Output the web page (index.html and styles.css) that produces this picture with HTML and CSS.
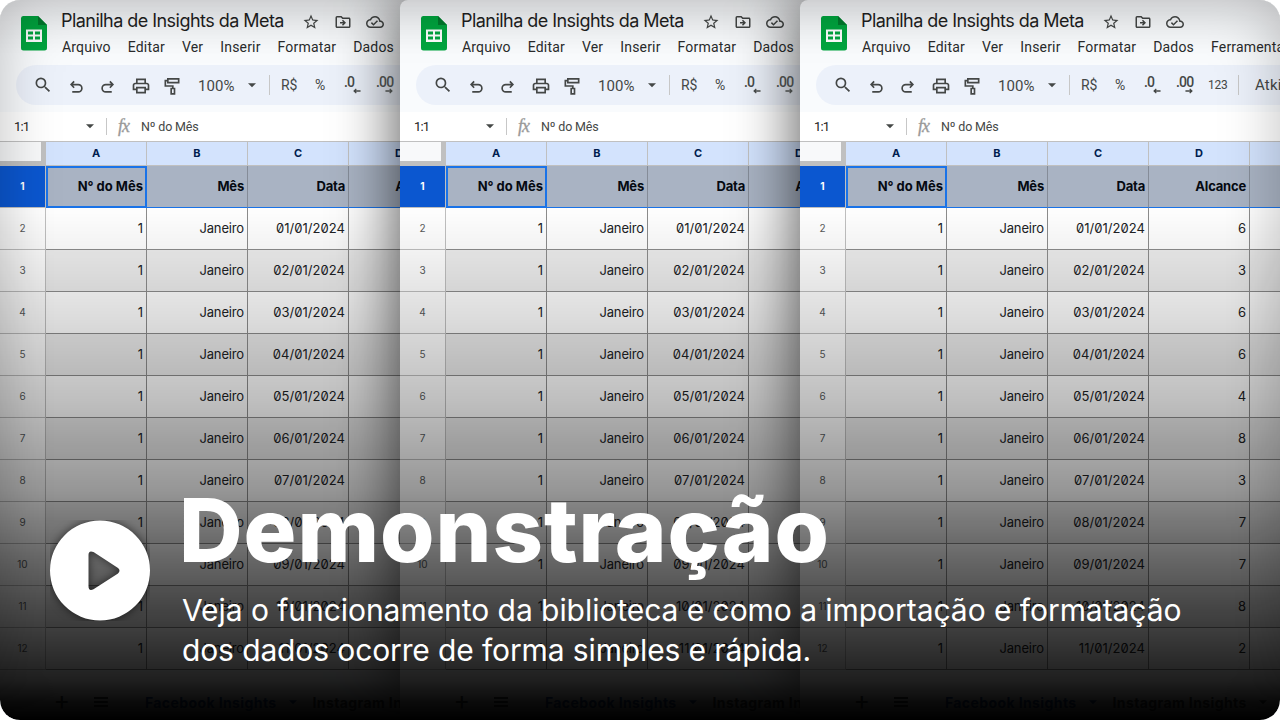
FILE: index.html
```html
<!DOCTYPE html>
<html lang="pt-BR">
<head>
<meta charset="utf-8">
<title>Demonstração</title>
<link rel="stylesheet" href="styles.css">
</head>
<body>
<svg class="defs" aria-hidden="true">
  <symbol id="sheets" viewBox="0 0 26 35"><path d="M2 0h15l9 9v23a2.500 2.500 0 0 1-2.500 2.500h-21A2.500 2.500 0 0 1 0 32V2.500A2.500 2.500 0 0 1 2 0z" fill="#00a63f"/><path d="M17 0l9 9h-9z" fill="#007b2d"/><path d="M5 13.500h16v12.500H5z" fill="#fff"/><path d="M7 15.500h5v3H7zM14 15.500h5v3h-5zM7 20.500h5v3H7zM14 20.500h5v3h-5z" fill="#00a63f"/></symbol>
  <symbol id="star" viewBox="0 0 24 24"><path fill="currentColor" d="M22 9.240l-7.190-.62L12 2 9.190 8.630 2 9.240l5.460 4.730L5.820 21 12 17.270 18.180 21l-1.630-7.030L22 9.240zM12 15.400l-3.760 2.270 1-4.280-3.320-2.880 4.380-.38L12 6.100l1.710 4.040 4.380.38-3.320 2.880 1 4.280L12 15.400z"/></symbol>
  <symbol id="folder" viewBox="0 0 24 24"><path fill="currentColor" d="M20 6h-8l-2-2H4a2 2 0 0 0-2 2v12c0 1.100.9 2 2 2h16c1.100 0 2-.9 2-2V8c0-1.100-.9-2-2-2zm0 12H4V6h5.170l2 2H20v10zm-8-1l4-4-4-4-1.400 1.400 1.600 1.600H8v2h4.200l-1.600 1.600z"/></symbol>
  <symbol id="cloud" viewBox="0 0 24 24"><path fill="currentColor" d="M19.350 10.040C18.670 6.590 15.640 4 12 4 9.110 4 6.600 5.640 5.350 8.040 2.340 8.360 0 10.910 0 14c0 3.310 2.690 6 6 6h13c2.760 0 5-2.240 5-5 0-2.640-2.050-4.780-4.650-4.960zM19 18H6c-2.210 0-4-1.790-4-4 0-2.050 1.530-3.760 3.560-3.970l1.070-.11.5-.95C8.080 7.140 9.940 6 12 6c2.620 0 4.880 1.860 5.390 4.430l.3 1.500 1.530.11c1.560.1 2.780 1.410 2.780 2.960 0 1.650-1.350 3-3 3zm-9-3.820l-2.090-2.090L6.500 13.500 10 17l6.010-6.010-1.410-1.410z"/></symbol>
  <symbol id="search" viewBox="0 0 24 24"><path fill="currentColor" d="M15.500 14h-.79l-.28-.27A6.470 6.470 0 0 0 16 9.500 6.500 6.500 0 1 0 9.500 16c1.610 0 3.090-.59 4.230-1.570l.27.28v.79l5 4.990L20.490 19l-4.990-5zm-6 0C7.010 14 5 11.990 5 9.500S7.010 5 9.500 5 14 7.010 14 9.500 11.990 14 9.500 14z"/></symbol>
  <symbol id="undo" viewBox="0 0 24 24"><path fill="none" stroke="currentColor" stroke-width="2.200" d="M9.500 4.500 5.500 8.800l4 4.200M6 8.800h9a4.700 4.700 0 0 1 0 9.700H7"/></symbol>
  <symbol id="print" viewBox="0 0 24 24"><path fill="currentColor" d="M19 8h-1V3H6v5H5c-1.660 0-3 1.340-3 3v6h4v4h12v-4h4v-6c0-1.660-1.340-3-3-3zM8 5h8v3H8V5zm8 14H8v-4h8v4zm4-4h-2v-2H6v2H4v-4c0-.55.45-1 1-1h14c.55 0 1 .45 1 1v4z"/></symbol>
  <symbol id="paint" viewBox="0 0 24 24"><path fill="none" stroke="currentColor" stroke-width="2" d="M7 3.500h13v4.500H7zM7 5.500H4V12h9v3M11 15h4v6.500h-4z"/></symbol>
  <symbol id="caret" viewBox="0 0 8 5"><path fill="currentColor" d="M0 .3h8l-4 4z"/></symbol>
  <symbol id="arrow" viewBox="0 0 9 6"><path fill="none" stroke="currentColor" stroke-width="1.500" d="M8.500 3H1.500M3.700.6 1.300 3l2.400 2.400"/></symbol>
</svg>
<main class="frame">
  <div class="panels" id="panels"></div>
  <div class="vignette"></div>
  <section class="caption">
    <svg class="play" viewBox="0 0 100 101"><path fill="#fff" fill-rule="evenodd" d="M50 .5a50 50 0 1 1 0 100 50 50 0 0 1 0-100zM38.500 35v31q0 5.500 5 3.200L68 53.500q3-2.700 0-5.400L43.500 32q-5-2-5 3z"/></svg>
    <div class="words">
      <h1>Demonstração</h1>
      <p><span class="line1">Veja o funcionamento da biblioteca e como a importação e formatação</span><br><span class="line2">dos dados ocorre de forma simples e rápida.</span></p>
    </div>
  </section>
</main>
<script src="app.js"></script>
</body>
</html>
```
FILE: styles.css
```css
* { box-sizing: border-box; }
body { margin: 0; background: #fff; font-family: Roboto, "Liberation Sans", sans-serif; }
.defs { display: none; }
svg { display: block; flex: none; }
.frame { position: relative; width: 1280px; height: 720px; border-radius: 20px; overflow: hidden; background: #aaa; }
.panels { display: grid; grid-template-columns: 400px 400px 480px; height: 720px; }
.panel { width: 480px; height: 720px; overflow: hidden; background: #f9fbfd; border-radius: 8px 0 0 8px; box-shadow: 0 0 64px rgba(0,0,0,.7); }
.top { height: 65px; display: flex; padding: 16px 0 0 21px; }
.top > svg { width: 26px; height: 35px; }
.heading { margin: -7px 0 0 14px; flex: none; }
.title-row { display: flex; align-items: center; height: 24px; color: #444746; }
.doc-title { width: 241px; font: 400 18px/24px Inter, sans-serif; letter-spacing: -.54px; color: #1f1f1f; white-space: nowrap; }
.title-row svg { width: 18px; height: 18px; margin-right: 14px; margin-top: 2px; }
.menu { display: flex; gap: 17px; padding: 5px 0 0 1px; font-size: 14px; line-height: 18px; letter-spacing: .18px; color: #2a2b2c; white-space: nowrap; }
.toolbar { width: 640px; height: 40px; margin-left: 16px; border-radius: 20px; background: #ecf1fa; color: #444746; display: flex; align-items: center; padding-left: 17px; }
.toolbar svg { width: 20px; height: 20px; }
.toolbar .i-search { margin: 0 14px 0 0; }
.toolbar .i-undo, .toolbar .i-redo { width: 18px; height: 18px; margin: 3px 14px 0 0; }
.toolbar .i-redo { transform: scaleX(-1); }
.toolbar .i-print { width: 20px; margin: 2px 11px 0 0; }
.toolbar .i-paint { width: 20px; margin: 2px 16px 0 0; }
.zoom { width: 50px; font-size: 15px; line-height: 20px; letter-spacing: .1px; margin-top: 2px; }
.toolbar .i-caret, .formula .i-caret { width: 8px; height: 5px; }
.bar { width: 1px; height: 20px; background: #c7c7c7; }
.toolbar .bar { margin: 0 11px 0 13px; }
.money { width: 34px; font-size: 14px; letter-spacing: -.2px; margin-top: -1px; }
.percent { width: 29px; font-size: 14px; margin-top: -1px; }
.decimal { width: 32px; height: 20px; position: relative; font: 500 14px/15px Roboto, sans-serif; letter-spacing: -.8px; }
.toolbar .decimal svg { position: absolute; width: 8px; height: 6px; left: 9px; top: 13px; }
.toolbar .decimal.more svg { transform: scaleX(-1); }
.n123 { font-size: 12px; width: 19px; letter-spacing: -.3px; }
.toolbar .last-bar { margin: 0 16px 0 11px; }
.font-name { font-size: 15px; letter-spacing: .2px; }
.formula { height: 29px; margin-top: 8px; padding: 0 0 2px 14px; background: #fff; display: flex; align-items: center; color: #444746; border-bottom: 1px solid #c0c0c0; box-shadow: 0 -1px #fff; }
.address { width: 72px; font-size: 13px; letter-spacing: -.8px; color: #222; }
.formula .bar { height: 17px; margin: 0 11px 0 12px; }
.fx { width: 23px; font: italic 18px/20px "Liberation Serif", serif; letter-spacing: -1px; -webkit-text-stroke: .3px #999; color: #999; }
.value { font-size: 12.500px; letter-spacing: -.15px; }
.sheet { display: grid; grid-template-columns: 46px repeat(5, 101px); width: 551px; background: #fff; }
.corner { height: 24px; border-right: 5px solid #c0c0c0; border-bottom: 5px solid #c0c0c0; background: #f8f9fa; }
.col { height: 24px; background: #d3e3fd; border-right: 1px solid #c0c0c0; border-bottom: 1px solid #c0c0c0; font: 700 11px/23px Inter, sans-serif; text-align: center; color: #001d4f; }
.rowno { height: 42px; border-right: 1px solid #c0c0c0; border-bottom: 1px solid #c0c0c0; font: 400 10px/41px Inter, sans-serif; color: #575a5a; text-align: center; }
.rowno.on { background: #0b57d0; color: #fff; font-weight: 700; }
.cell { height: 42px; padding-right: 3px; border-right: 1px solid #8d8d8d; border-bottom: 1px solid #8d8d8d; font: 400 13px/40px Inter, sans-serif; font-feature-settings: "zero"; letter-spacing: -.15px; color: #202225; text-align: right; white-space: nowrap; }
.cell.date { letter-spacing: .05px; }
.cell.shade { background: #eee; }
.cell.head { background: #a9b3c3; font-weight: 700; font-feature-settings: normal; letter-spacing: -.2px; color: #060a12; border-right-color: #858c98; border-bottom-color: #1a73e8; }
.cell.head.sel { border: 0; box-shadow: inset 0 0 0 2px #1a73e8; padding-right: 4px; letter-spacing: 0; }
.foot { display: flex; align-items: center; height: 50px; padding: 14px 0 0 55px; font: 700 14px Inter, sans-serif; letter-spacing: .4px; color: #444746; white-space: nowrap; }
.plus { font: 24px/20px Roboto, sans-serif; width: 41px; }
.lines { width: 14px; height: 10px; border-top: 2px solid; border-bottom: 2px solid; background: linear-gradient(currentColor, currentColor) center/14px 2px no-repeat; margin-right: 37px; }
.tab { width: 174px; display: flex; align-items: center; gap: 12px; }
.tab svg { width: 8px; height: 5px; }
.tab.active { color: #1c4fa0; }
.vignette { position: absolute; inset: 0; border-radius: 20px; box-shadow: inset 0 0 60px rgba(0,0,0,.25); background: linear-gradient(to bottom, rgba(0,0,0,.05), transparent 60px), linear-gradient(to bottom, transparent 205px, rgba(0,0,0,.05) 250px, rgba(0,0,0,.125) 310px, rgba(0,0,0,.25) 400px, rgba(0,0,0,.41) 490px, rgba(0,0,0,.6) 560px, rgba(0,0,0,.76) 630px, rgba(0,0,0,.88) 680px, rgba(0,0,0,.96) 703px, #000 720px); }
.caption { position: absolute; left: 50px; top: 478px; display: flex; color: #fff; }
.play { width: 100px; height: 101px; margin: 42px 32px 0 0; overflow: hidden; }
.play path { filter: drop-shadow(0 0 5px rgba(0,0,0,.6)); }
h1 { margin: -1px 0 0 -3px; font: 800 88px/106px Inter, sans-serif; letter-spacing: 1px; white-space: nowrap; }
.words p { margin: 7px 0 0; font: 400 30px/40px Inter, sans-serif; white-space: nowrap; }
.line1 { letter-spacing: -.05px; }
.line2 { letter-spacing: -.12px; }
```
FILE: app.js
```js
const icon = (id, cls = 'i-' + id) => `<svg class="${cls}"><use href="#${id}"/></svg>`;
const reach = [6, 3, 6, 6, 4, 8, 3, 7, 7, 8, 2];
const header = ['N° do Mês', 'Mês', 'Data', 'Alcance', ''];
const menu = ['Arquivo', 'Editar', 'Ver', 'Inserir', 'Formatar', 'Dados', 'Ferramentas'];

function grid() {
  let html = '<div class="corner"></div>' + [...'ABCDE'].map(c => `<div class="col">${c}</div>`).join('');
  html += '<div class="rowno on">1</div>' + header.map((h, i) => `<div class="cell head${i ? '' : ' sel'}">${h}</div>`).join('');
  reach.forEach((n, i) => {
    const s = i % 2 ? ' shade' : '';
    const date = String(i + 1).padStart(2, '0') + '/01/2024';
    html += `<div class="rowno">${i + 2}</div><div class="cell${s}">1</div><div class="cell${s}">Janeiro</div><div class="cell date${s}">${date}</div><div class="cell${s}">${n}</div><div class="cell${s}"></div>`;
  });
  return html;
}

const panel = () => `<article class="panel">
  <header class="top">${icon('sheets')}<div class="heading">
    <div class="title-row"><span class="doc-title">Planilha de Insights da Meta</span>${icon('star')}${icon('folder')}${icon('cloud')}</div>
    <nav class="menu">${menu.map(m => `<span>${m}</span>`).join('')}</nav>
  </div></header>
  <div class="toolbar">${icon('search')}${icon('undo')}${icon('undo', 'i-redo')}${icon('print')}${icon('paint')}
    <span class="zoom">100%</span>${icon('caret')}<i class="bar"></i>
    <span class="money">R$</span><span class="percent">%</span>
    <span class="decimal">.0${icon('arrow')}</span><span class="decimal more">.00${icon('arrow')}</span>
    <span class="n123">123</span><i class="bar last-bar"></i><span class="font-name">Atkinson</span></div>
  <div class="formula"><span class="address">1:1</span>${icon('caret')}<i class="bar"></i><span class="fx">fx</span><span class="value">Nº do Mês</span></div>
  <div class="sheet">${grid()}</div>
  <footer class="foot"><span class="plus">+</span><span class="lines"></span><span class="tab active">Facebook Insights${icon('caret')}</span><span class="tab">Instagram Insights${icon('caret')}</span></footer>
</article>`;

document.getElementById('panels').innerHTML = panel().repeat(3);
```
